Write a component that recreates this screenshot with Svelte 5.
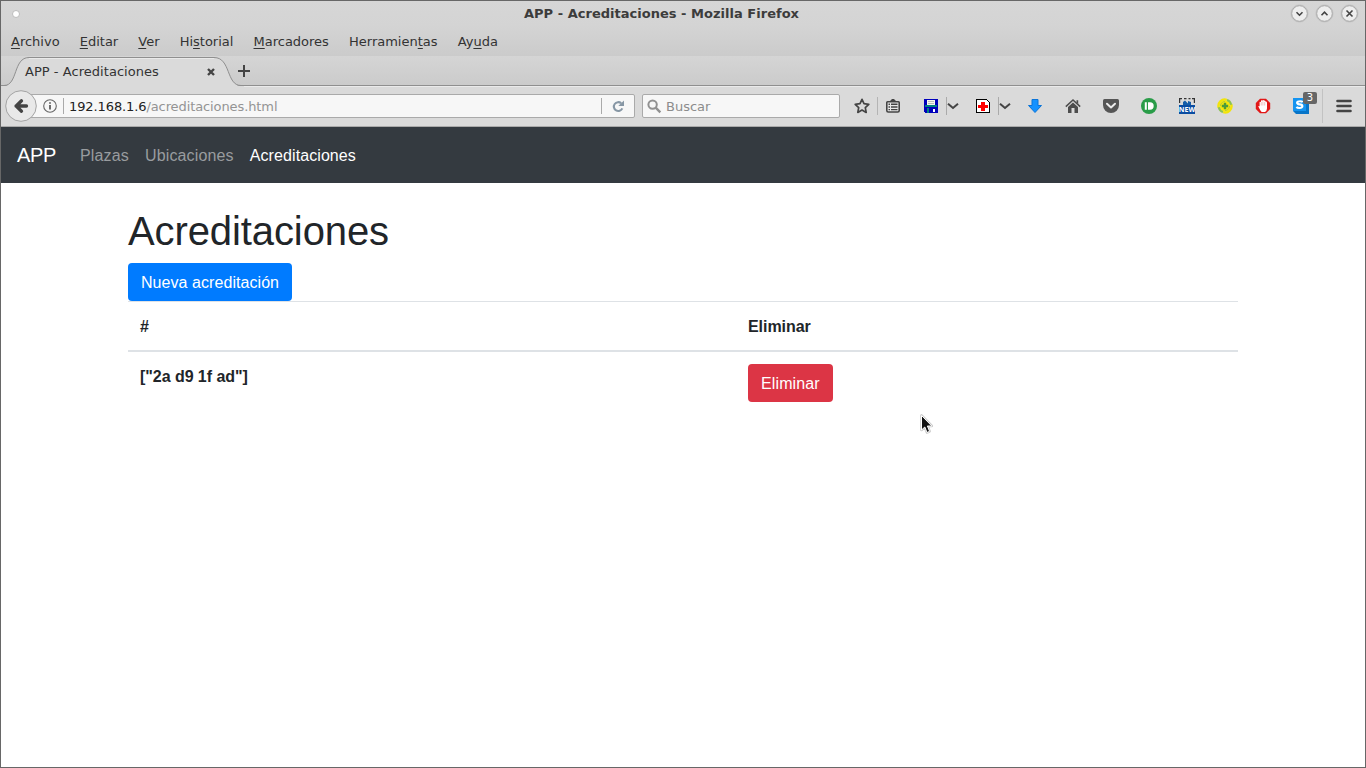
<script>
  const menus = [
    ['', 'A', 'rchivo'], ['', 'E', 'ditar'], ['', 'V', 'er'], ['Hi', 's', 'torial'],
    ['', 'M', 'arcadores'], ['Herramien', 't', 'as'], ['Ay', 'u', 'da']
  ];
  const links = ['Plazas', 'Ubicaciones', 'Acreditaciones'];
  const controls = ['M-3 -1.3 L0 1.7 L3 -1.3', 'M-3 1.7 L0 -1.3 L3 1.7', 'M-3 -3 L3 3 M3 -3 L-3 3'];
</script>

<div class="window">
  <header class="chrome">
    <div class="title">
      <svg class="dot" width="10" height="10"><circle cx="5" cy="5" r="3.5" fill="#fff" stroke="#bcbcbc" /></svg>
      <strong>APP - Acreditaciones - Mozilla Firefox</strong>
      <div class="controls">
        {#each controls as d}
          <svg width="19" height="19" viewBox="-9.5 -9.5 19 19">
            <circle r="8.6" fill="#d9d9d9" stroke="#c5c5c5" />
            <circle r="7.8" fill="#eee" stroke="#999" stroke-width=".8" />
            <path {d} fill="none" stroke="#444" stroke-width="1.6" />
          </svg>
        {/each}
      </div>
    </div>
    <nav class="menus">
      {#each menus as [a, b, c]}<span>{a}<u>{b}</u>{c}</span>{/each}
    </nav>
  </header>

  <div class="tabs">
    <div class="tab">
      <svg class="shape" width="243" height="31" viewBox="0 0 243 31">
        <path d="M0 30 H3 C17 30 12 1.5 28 1.5 H213 C230 1.5 225 30 240 30 H243 V31 H0Z" fill="#dadada" />
        <path d="M0 29.5 H3 C17 29.5 12 1.5 28 1.5 H213 C230 1.5 225 29.5 240 29.5 H243" fill="none" stroke="#8f8f8f" />
        <path d="M28 2.5 H213" stroke="#e9e9e9" />
      </svg>
      <span class="name">APP - Acreditaciones</span>
      <svg class="close" width="8" height="8" viewBox="0 0 8 8"><path d="M1 1 L7 7 M7 1 L1 7" stroke="#444" stroke-width="2.4" /></svg>
    </div>
    <svg class="plus" width="12" height="12" viewBox="0 0 12 12"><path d="M6 0 V12 M0 6 H12" stroke="#444" stroke-width="2" /></svg>
  </div>

  <div class="toolbar">
    <svg class="back" width="32" height="32" viewBox="0 0 32 32">
      <circle cx="16" cy="16" r="15.3" fill="#e9e9e9" stroke="#a3a3a3" />
      <path d="M21.5 16 H11 M16.5 10.8 L11.2 16 L16.5 21.2" fill="none" stroke="#444" stroke-width="3.3" stroke-linecap="round" stroke-linejoin="round" />
    </svg>
    <div class="url">
      <svg width="14" height="14" viewBox="0 0 14 14"><circle cx="7" cy="7" r="6.3" fill="none" stroke="#666" stroke-width="1.1" /><path d="M7 6 V10.5 M7 3.2 V4.8" stroke="#555" stroke-width="1.7" /></svg>
      <i></i>
      <span class="address">192.168.1.6<em>/acreditaciones.html</em></span>
      <div class="reload">
        <svg width="13" height="13" viewBox="0 0 13 13"><path d="M9.2 3.3 A4.4 4.4 0 1 0 10.3 8.3" fill="none" stroke="#8797a5" stroke-width="2.1" /><path d="M12 0.5 V6 H6.3Z" fill="#8797a5" /></svg>
      </div>
    </div>
    <div class="search">
      <svg width="15" height="15" viewBox="0 0 15 15"><circle cx="5.6" cy="5.6" r="4.2" fill="none" stroke="#919191" stroke-width="2" /><path d="M8.7 8.7 L13.3 13.3" stroke="#919191" stroke-width="2.4" /></svg>
      <span>Buscar</span>
    </div>

    <div class="icons">
      <span class="cell w32 end">
        <svg width="18" height="18" viewBox="-9 -9 18 18"><path d="M0 -6.7 L2 -2.3 L6.8 -1.7 L3.3 1.6 L4.2 6.4 L0 4.1 L-4.2 6.4 L-3.3 1.6 L-6.8 -1.7 L-2 -2.3Z" fill="none" stroke="#444" stroke-width="1.7" stroke-linejoin="round" /></svg>
      </span>
      <span class="cell w30">
        <svg width="16" height="16" viewBox="0 0 16 16"><path d="M2.5 3.8 H13.5 Q14.2 3.8 14.2 4.5 V12.5 Q14.2 14 12.7 14 H3.3 Q1.8 14 1.8 12.5 V4.5 Q1.8 3.8 2.5 3.8Z" fill="#e8e8e8" stroke="#444" stroke-width="1.6" /><path d="M5.3 4 V2.8 L7 1 H9 L10.7 2.8 V4Z" fill="#444" /><path d="M3.5 6.3 H5 M6 6.3 H12.5 M3.5 9 H5 M6 9 H12.5 M3.5 11.6 H5 M6 11.6 H12.5" stroke="#444" stroke-width="1.4" /></svg>
      </span>
      <span class="cell w30 gap8">
        <svg width="14" height="14" viewBox="0 0 14 14" shape-rendering="crispEdges"><path d="M0 0 H14 V14 H1 L0 13Z" fill="#00b" /><path d="M1 6 H13 V8 H1Z" fill="#008080" /><path d="M3 1 H11 V6 H3Z" fill="#f8f8ec" /><path d="M4 2.5 H10 M4 4.5 H10" stroke="#bbb" /><path d="M3 9 H5 V14 H3Z" fill="#008080" /><path d="M9 10 H11 V13 H9Z" fill="#fff" /></svg>
      </span>
      <span class="cell w14 start"><svg width="12" height="8" viewBox="0 0 12 8"><path d="M1 1.7 L6 6 L11 1.7" fill="none" stroke="#444" stroke-width="2" /></svg></span>
      <span class="cell w30 gap8">
        <svg width="14" height="14" viewBox="0 0 14 14" shape-rendering="crispEdges"><path d="M1 .5 H10.5 L13.5 3.5 V13 L13 13.5 H1 L.5 13 V1Z" fill="#fff" stroke="#000" /><path d="M5 3 H9 V6 H12 V9 H9 V12 H5 V9 H2 V6 H5Z" fill="#f00" /></svg>
      </span>
      <span class="cell w14 start"><svg width="12" height="8" viewBox="0 0 12 8"><path d="M1 1.7 L6 6 L11 1.7" fill="none" stroke="#444" stroke-width="2" /></svg></span>
      <span class="cell w38 gap4">
        <svg width="16" height="16" viewBox="0 0 16 16"><path d="M5 1.5 H11 V7.5 H14.5 L8 14.5 L1.5 7.5 H5Z" fill="#1592ff" stroke="#0b74d8" stroke-linejoin="round" /></svg>
      </span>
      <span class="cell w38">
        <svg width="16" height="16" viewBox="0 0 16 16"><path d="M11.5 2.2 H13.2 V6 L11.5 4.5Z M3 9 L8 4.4 L13 9 V15 H9.5 V10 H6.5 V15 H3Z" fill="#4d4d4d" /><path d="M.8 8.6 L8 2 L15.2 8.6" fill="none" stroke="#4d4d4d" stroke-width="1.5" /></svg>
      </span>
      <span class="cell w38">
        <svg width="16" height="16" viewBox="0 0 16 16"><path d="M1.5 1 H14.5 Q16 1 16 2.5 V7 A8 8 0 0 1 0 7 V2.5 Q0 1 1.5 1Z" fill="#555" /><path d="M4 5.7 L8 9.5 L12 5.7" fill="none" stroke="#ececec" stroke-width="2" stroke-linecap="round" stroke-linejoin="round" /></svg>
      </span>
      <span class="cell w38">
        <svg width="16" height="16" viewBox="0 0 16 16"><circle cx="8" cy="8" r="8" fill="#299c48" /><path d="M3.8 4.3 H5.8 V11.7 H3.8Z M7 4.3 H9 A3.7 3.7 0 0 1 9 11.7 H7Z" fill="#fff" /></svg>
      </span>
      <span class="cell w38 new">
        <svg width="16" height="16" viewBox="0 0 16 16"><path d="M.6 5 V.6 H3 M5 .6 H7.5 M9.5 .6 H11.5 M13 .6 H15.4 V5" fill="none" stroke="#333" stroke-width="1.2" /><path d="M4 7 V4 L6 2.5 L9 5.5 V3 L12 4 V7Z" fill="#155da8" /><path d="M0 7 H16 V16 H0Z" fill="#0b4da2" /></svg>
        <b>NEW</b>
      </span>
      <span class="cell w38">
        <svg width="16" height="16" viewBox="0 0 16 16"><circle cx="8" cy="8" r="5.5" fill="#f7e70b" /><path d="M1.8 9.8 A6.3 6.3 0 0 1 9.8 1.9 M14.2 6.2 A6.3 6.3 0 0 1 6.2 14.1" fill="none" stroke="#f3e409" stroke-width="2.4" /><path d="M10 2 A6.3 6.3 0 0 1 14.2 6.8 M6 14 A6.3 6.3 0 0 1 1.8 9.2" fill="none" stroke="#8cc152" stroke-width="2" /><path d="M3.4 8 A4.7 4.7 0 0 1 8 3.4 M12.6 8 A4.7 4.7 0 0 1 8 12.6" fill="none" stroke="#b5cf35" stroke-width="1" /><path d="M8 4.8 V11.2 M4.8 8 H11.2" stroke="#4b9c3b" stroke-width="2.4" /></svg>
      </span>
      <span class="cell w38">
        <svg width="16" height="16" viewBox="0 0 16 16"><path d="M5 .8 H11 L15.2 5 V11 L11 15.2 H5 L.8 11 V5Z" fill="#e21717" /><path d="M3.2 8 L4.6 8.2 V4 Q5.2 3.3 6 4 V2.6 Q6.8 1.8 7.5 2.5 Q8.3 1.4 9.1 2.5 Q10.3 2.2 10.5 3.6 Q11.9 3.4 12 4.8 V10.5 Q11.7 13.5 10 14 H6.7 Q5.3 13 3.2 8Z" fill="#fff" /><path d="M6.2 4 V7.5 M7.9 3.5 V7.5 M9.7 4 V7.5" stroke="#e59b9b" stroke-width=".6" /></svg>
      </span>
      <span class="cell w38 skype">
        <svg width="16" height="16" viewBox="0 0 16 16"><path d="M0 0 L13 0 L16 3 V16 H3 L0 13Z" fill="#0875c8" /><path d="M0 0 H13 V13 H0Z" fill="#1594f0" /><path d="M9.7 4.2 Q8.9 3.2 6.6 3.3 Q4.1 3.3 4.1 4.8 Q4.1 6.2 6.6 6.4 Q9.4 6.6 9.4 8.2 Q9.2 10 6.5 10 Q4.3 10 3.4 9" fill="none" stroke="#fff" stroke-width="2.1" /></svg>
        <b class="badge">3</b>
      </span>
      <span class="cell menu">
        <svg width="16" height="14" viewBox="0 0 16 14"><path d="M1.5 2 H14.5 M1.5 7 H14.5 M1.5 12 H14.5" stroke="#444" stroke-width="2.6" stroke-linecap="round" /></svg>
      </span>
    </div>
  </div>

  <main>
    <nav class="navbar">
      <a class="brand" href="#app">APP</a>
      {#each links as link, i}<a class:active={i === 2} href="#app">{link}</a>{/each}
    </nav>
    <section class="container">
      <h1>Acreditaciones</h1>
      <button class="primary">Nueva acreditación</button>
      <table>
        <thead><tr><th>#</th><th>Eliminar</th></tr></thead>
        <tbody><tr><th>["2a d9 1f ad"]</th><td><button class="danger">Eliminar</button></td></tr></tbody>
      </table>
    </section>
  </main>
  <svg class="pointer" width="14" height="21" viewBox="0 0 14 21"><path d="M1.5 1.5 V16 L4.8 13 L7 18.5 L9.6 17.3 L7.4 12 H11.8Z" fill="#111" stroke="#ccc" stroke-width="2.6" stroke-linejoin="round" /><path d="M1.5 1.5 V16 L4.8 13 L7 18.5 L9.6 17.3 L7.4 12 H11.8Z" fill="#111" stroke="#fff" /></svg>
</div>

<style>
  :global(body) { margin: 0; }
  * { box-sizing: border-box; }
  svg { display: block; flex: none; }
  .window { position: relative; width: 1366px; height: 768px; overflow: hidden; border: 1px solid #676767; display: flex; flex-direction: column; background: #fff; font: 13px/16px "DejaVu Sans", sans-serif; color: #333; }
  .chrome { height: 55px; flex: none; background: linear-gradient(#d6d6d6, #d4d4d4 45%, #cbcbcb); }
  .title { height: 25px; display: grid; grid-template-columns: 70px 1fr 75px; align-items: center; }
  .title strong { text-align: center; color: #3c3c3c; padding-right: 38px; letter-spacing: .02px; }
  .dot { margin-left: 10px; }
  .controls { display: flex; gap: 6px; justify-self: end; margin-right: 6px; }
  .menus { display: flex; gap: 20.1px; padding: 8px 10px 0; }
  u { text-underline-offset: 2px; text-decoration-thickness: 1px; }
  .tabs { height: 30px; flex: none; display: flex; align-items: center; background: linear-gradient(#d5d5d5, #cbcbcb); border-bottom: 1px solid #8f8f8f; }
  .tab { position: relative; width: 235px; height: 30px; display: flex; align-items: center; padding: 2px 0 0 24px; }
  .shape { position: absolute; left: 0; top: 0; }
  .name { position: relative; width: 182px; letter-spacing: .04px; }
  .close { position: relative; }
  .plus { margin: 1px 0 0 2px; }
  .toolbar { height: 41px; flex: none; display: flex; align-items: center; padding: 0 0 1px 4px; background: #dadada; border-top: 1px solid #eaeaea; border-bottom: 1px solid #aaa; }
  .back { position: relative; z-index: 1; }
  .url, .search { height: 24px; border: 1px solid #aaa; border-radius: 2px; background: #f7f7f7; display: flex; align-items: center; }
  .url { width: 606px; margin-left: -8px; padding-left: 13px; }
  .url i { width: 1px; height: 16px; background: #aaa; margin: 0 5px 0 6px; }
  .address { flex: 1; color: #222; letter-spacing: -.1px; padding-top: 2px; }
  .address em { font-style: normal; color: #949494; }
  .reload { width: 33px; height: 16px; border-left: 1px solid #aaa; display: flex; align-items: center; justify-content: center; }
  .search { width: 198px; margin-left: 7px; padding-left: 4px; gap: 4px; color: #8c8c8c; }
  .search span { padding-top: 2px; }
  .icons { display: flex; height: 38px; align-items: center; margin-left: 6px; }
  .cell { position: relative; height: 18px; display: flex; align-items: center; justify-content: center; flex: none; }
  .w32 { width: 32px; } .w30 { width: 30px; } .w14 { width: 14px; } .w38 { width: 38px; }
  .gap8 { margin-left: 8px; } .gap4 { margin-left: 4px; }
  .end { border-right: 1px solid #b4b4b4; }
  .start { padding-right: 1px; }
  .start::before { content: ""; position: absolute; left: 0; top: 0; width: 1px; height: 18px; background: #aaa; }
  .menu { width: 43px; height: 34px; margin-left: 2px; border-left: 1px solid #c2c2c2; }
  .new b { position: absolute; left: 0; right: 0; top: 8px; text-align: center; font: bold 7px/9px "Open Sans", sans-serif; color: #fff; }
  .badge { position: absolute; left: 21px; top: -5px; width: 14px; height: 12px; border-radius: 2px; background: #666; color: #fff; font: 10px/12px "DejaVu Sans", sans-serif; text-align: center; }
  main { flex: 1; font: 16px/24px "Liberation Sans", sans-serif; color: #212529; }
  .navbar { height: 56px; background: #343a40; display: flex; align-items: center; padding: 0 16px; }
  .navbar a { color: #999c9f; text-decoration: none; padding: 2px 8px 0; letter-spacing: .15px; }
  .navbar .brand { color: #fff; font-size: 20px; padding: 0; margin-right: 16px; letter-spacing: -.35px; }
  .navbar .active { color: #fff; letter-spacing: .09px; }
  .container { width: 1140px; margin: 0 auto; padding: 24px 15px 0; }
  h1 { font-size: 40px; line-height: 48px; font-weight: 400; margin: 0 0 8px; letter-spacing: -.1px; }
  button { display: block; font: inherit; color: #fff; border: 0; border-radius: 4px; padding: 8px 13px 6px; height: 38px; letter-spacing: .06px; }
  .primary { background: #007bff; }
  .danger { background: #dc3545; letter-spacing: .12px; }
  table { width: 100%; border-collapse: collapse; table-layout: fixed; }
  th, td { text-align: left; vertical-align: top; padding: 12px; border-top: 1px solid #dee2e6; }
  th { padding: 13px 12px 11px; letter-spacing: -.05px; }
  th:first-child { width: 608px; }
  thead th { border-bottom: 2px solid #dee2e6; }
  .pointer { position: absolute; left: 919px; top: 413px; }
</style>
